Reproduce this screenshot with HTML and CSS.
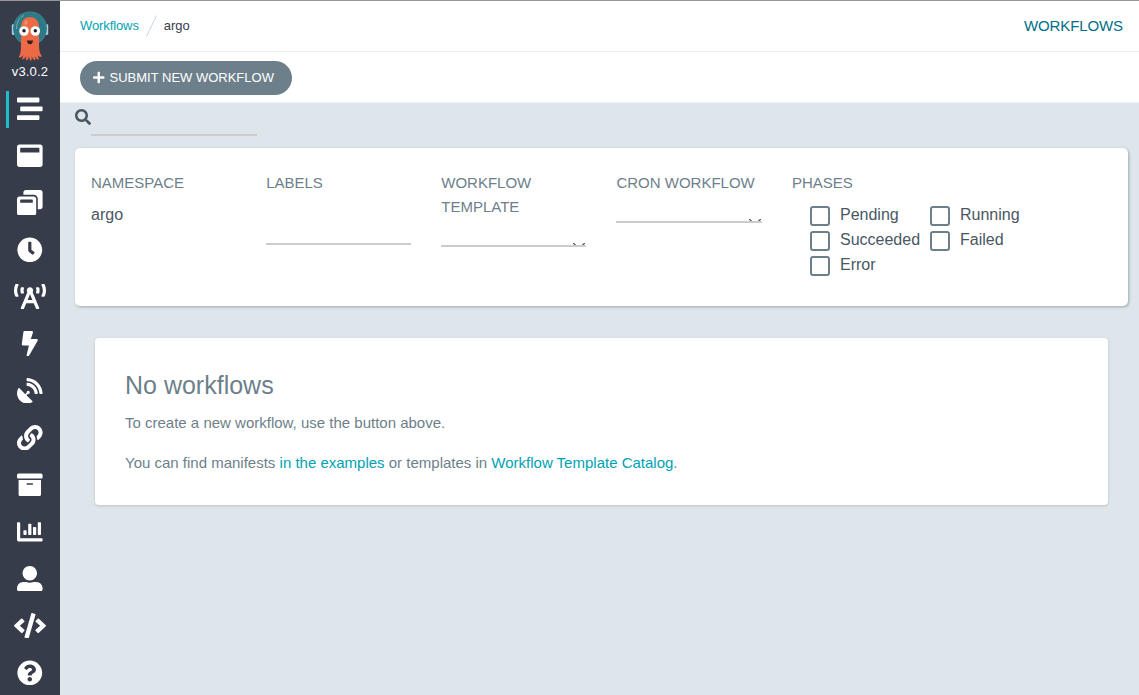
FILE: index.html
```html
<!DOCTYPE html>
<html lang="en">
<head>
<meta charset="utf-8">
<title>Workflows</title>
<link rel="stylesheet" href="styles.css">
</head>
<body>
<div class="app">
  <nav class="sidebar">
    <div class="logo">
      <svg width="38" height="52" viewBox="0 0 38 52">
        <rect x="0.800" y="14" width="3" height="11" rx="1.500" fill="#a9cfe5"/>
        <rect x="34.200" y="14" width="3" height="11" rx="1.500" fill="#a9cfe5"/>
        <circle cx="19" cy="18.500" r="17" fill="#3a858f"/>
        <circle cx="19" cy="18.500" r="16" fill="#2b7a86"/>
        <path d="M5.500 19C5.500 12 8.500 7.500 13 5.500" fill="none" stroke="#78aeb4" stroke-width="1"/>
        <path d="M19 7c-6 0-9 4.500-9 10.500v17c0 6-.5 10-2.500 13 3 .3 4-1 4.700-2.500-.2 2-.7 3-1.200 4.500 2.500-.3 3.500-1.500 4-4 .2 2 .2 4-.2 5 2-.5 3-1.800 3.200-4.500.3 2.500.7 4 2 5 .8-1.700.8-3 .8-5 .7 2.500 1.700 4 3.600 4.500-.3-1.700-.5-2.500-.5-4.500.8 2.500 2 3.700 4.300 3.500-1-1.700-1.300-3-1.500-4.500.8 1.500 2 2.200 4.300 1.500-2.500-3-3-7-3-12V17.500C28 11.500 25 7 19 7z" fill="#ec6a45"/>
        <ellipse cx="15" cy="12.500" rx="1.700" ry="2.200" fill="#f2906c"/>
        <circle cx="13" cy="21" r="4.800" fill="#fff"/>
        <circle cx="24.300" cy="21" r="4.800" fill="#fff"/>
        <circle cx="13" cy="20.800" r="1.700" fill="#1c1c24"/>
        <circle cx="24.300" cy="20.800" r="1.700" fill="#1c1c24"/>
        <path d="M16 30.500h6c0 2.300-1.300 3.800-3 3.800s-3-1.500-3-3.800z" fill="#3b1c20"/>
      </svg>
      <div class="version">v3.0.2</div>
    </div>
    <a class="item active"><svg class="icon" viewBox="0 0 512 512"><path d="M16 128h416c8.840 0 16-7.160 16-16V48c0-8.840-7.160-16-16-16H16C7.160 32 0 39.160 0 48v64c0 8.840 7.160 16 16 16zm480 80H80c-8.840 0-16 7.160-16 16v64c0 8.840 7.160 16 16 16h416c8.840 0 16-7.160 16-16v-64c0-8.840-7.160-16-16-16zm-64 176H16c-8.840 0-16 7.160-16 16v64c0 8.840 7.160 16 16 16h416c8.840 0 16-7.160 16-16v-64c0-8.840-7.160-16-16-16z"/></svg></a>
    <a class="item"><svg class="icon" viewBox="0 0 512 512"><path d="M464 32H48C21.500 32 0 53.500 0 80v352c0 26.500 21.500 48 48 48h416c26.500 0 48-21.500 48-48V80c0-26.500-21.500-48-48-48zm-16 160H64v-84c0-6.600 5.400-12 12-12h360c6.600 0 12 5.400 12 12v84z"/></svg></a>
    <a class="item"><svg class="icon" viewBox="0 0 512 512"><path d="M512 48v288c0 26.500-21.500 48-48 48h-48V176c0-44.100-35.900-80-80-80H128V48c0-26.500 21.500-48 48-48h288c26.500 0 48 21.500 48 48zM384 176v288c0 26.500-21.500 48-48 48H48c-26.500 0-48-21.500-48-48V176c0-26.500 21.500-48 48-48h288c26.500 0 48 21.500 48 48zm-68 28c0-6.600-5.400-12-12-12H76c-6.600 0-12 5.400-12 12v52h252v-52z"/></svg></a>
    <a class="item"><svg class="icon" viewBox="0 0 512 512"><path d="M256,8C119,8,8,119,8,256S119,504,256,504,504,393,504,256,393,8,256,8Zm92.490,313h0l-20,25a16,16,0,0,1-22.490,2.500h0l-67-49.720a40,40,0,0,1-15-31.230V112a16,16,0,0,1,16-16h32a16,16,0,0,1,16,16V256l58,42.500A16,16,0,0,1,348.490,321Z"/></svg></a>
    <a class="item"><svg class="icon wide" viewBox="0 0 640 512"><path d="M150.940 192h33.730c11.010 0 18.610-10.830 14.860-21.180-4.930-13.580-7.550-27.980-7.550-42.820s2.620-29.240 7.550-42.820C203.290 74.830 195.680 64 184.670 64h-33.730c-7.010 0-13.460 4.490-15.410 11.230C130.640 92.210 128 109.880 128 128c0 18.120 2.640 35.790 7.540 52.760 1.940 6.740 8.390 11.240 15.400 11.240zM89.920 23.340C95.560 12.720 87.970 0 75.960 0H40.630c-6.270 0-12.140 3.590-14.740 9.310C9.400 45.540 0 85.650 0 128c0 24.750 3.120 68.330 26.690 118.860 2.620 5.630 8.420 9.140 14.610 9.140h34.840c12.020 0 19.610-12.740 13.950-23.370-49.780-93.320-16.710-178.150-.17-209.290zM614.060 9.290C611.460 3.580 605.600 0 599.330 0h-35.420c-11.980 0-19.660 12.660-14.020 23.250 18.270 34.290 48.420 119.420.28 209.230-5.720 10.680 1.800 23.520 13.910 23.520h35.230c6.270 0 12.130-3.580 14.730-9.290C630.570 210.480 640 170.360 640 128s-9.420-82.480-25.940-118.710zM489.060 64h-33.730c-11.010 0-18.610 10.830-14.860 21.180 4.930 13.580 7.550 27.980 7.550 42.820s-2.620 29.240-7.550 42.820c-3.760 10.350 3.850 21.180 14.860 21.180h33.730c7.020 0 13.460-4.490 15.410-11.240 4.900-16.970 7.530-34.640 7.530-52.760 0-18.120-2.640-35.790-7.540-52.760-1.940-6.750-8.390-11.240-15.400-11.240zm-116.300 100.120c7.050-10.290 11.200-22.710 11.200-36.120 0-35.350-28.630-64-63.960-64-35.320 0-63.960 28.650-63.960 64 0 13.410 4.150 25.830 11.200 36.120l-130.500 313.410c-3.400 8.150.46 17.520 8.610 20.920l29.510 12.310c8.150 3.400 17.520-.46 20.910-8.610L244.960 384h150.070l49.200 118.150c3.400 8.160 12.760 12.010 20.910 8.610l29.510-12.310c8.150-3.400 12-12.770 8.610-20.920l-130.500-313.410zM271.620 320L320 203.810 368.380 320h-96.760z"/></svg></a>
    <a class="item"><svg class="icon" viewBox="-96 0 512 512"><path d="M296 160H180.600l42.600-129.800C227.200 15 215.700 0 200 0H56C44 0 33.800 8.900 32.200 20.800l-32 240C-1.700 275.200 9.500 288 24 288h118.700L96.600 482.500c-3.600 15.200 8 29.500 23.300 29.500 8.400 0 16.400-4.400 20.800-12l176-304c9.300-15.900-2.200-36-20.700-36z"/></svg></a>
    <a class="item"><svg class="icon" viewBox="0 0 512 512"><path d="M305.450,462.590c7.390,7.298,6.188,20.097-3,25.004-77.713,41.803-176.726,29.910-242.343-35.708C-5.496,386.282-17.404,287.362,24.414,209.554c4.891-9.095,17.690-10.298,25.003-3L166.229,323.367l27.394-27.395c-.688-2.610-1.594-5-1.594-7.813a32.004,32.004,0,1,1,32.004,32.004c-2.797,0-5.204-.891-7.798-1.594l-27.410,27.410ZM511.976,303.067a16.103,16.103,0,0,1-16.002,17.002H463.860a15.970,15.970,0,0,1-15.893-15.002C440.467,175.549,336.453,70.534,207.031,63.533a15.845,15.845,0,0,1-15.002-15.908V16.027A16.094,16.094,0,0,1,209.031.024C372.255,8.619,503.475,139.841,511.976,303.067Zm-96.012-.297a16.211,16.211,0,0,1-16.111,17.299H367.645a16.069,16.069,0,0,1-15.893-14.705c-6.907-77.011-68.118-138.910-144.925-145.224a15.940,15.940,0,0,1-14.799-15.893V112.134a16.134,16.134,0,0,1,17.299-16.096C319.451,104.539,407.556,192.645,415.964,302.770Z"/></svg></a>
    <a class="item"><svg class="icon" viewBox="0 0 512 512"><path d="M326.612 185.391c59.747 59.809 58.927 155.698.36 214.590-.11.12-.24.25-.36.37l-67.200 67.200c-59.270 59.270-155.699 59.262-214.960 0-59.270-59.260-59.270-155.700 0-214.960l37.106-37.106c9.840-9.840 26.786-3.300 27.294 10.606.648 17.722 3.826 35.527 9.690 52.721 1.986 5.822.567 12.262-3.783 16.612l-13.087 13.087c-28.026 28.026-28.905 73.660-1.155 101.960 28.024 28.579 74.086 28.749 102.325.51l67.200-67.190c28.191-28.191 28.073-73.757 0-101.830-3.701-3.694-7.429-6.564-10.341-8.569a16.037 16.037 0 0 1-6.947-12.606c-.396-10.567 3.348-21.456 11.698-29.806l21.054-21.055c5.521-5.521 14.182-6.199 20.584-1.731a152.482 152.482 0 0 1 20.522 17.197zM467.547 44.449c-59.261-59.262-155.690-59.270-214.960 0l-67.200 67.200c-.12.12-.25.25-.36.37-58.566 58.892-59.387 154.781.36 214.590a152.454 152.454 0 0 0 20.521 17.196c6.402 4.468 15.064 3.789 20.584-1.731l21.054-21.055c8.350-8.350 12.094-19.239 11.698-29.806a16.037 16.037 0 0 0-6.947-12.606c-2.912-2.005-6.640-4.875-10.341-8.569-28.073-28.073-28.191-73.639 0-101.830l67.200-67.190c28.239-28.239 74.300-28.069 102.325.51 27.750 28.300 26.872 73.934-1.155 101.960l-13.087 13.087c-4.350 4.350-5.769 10.790-3.783 16.612 5.864 17.194 9.042 34.999 9.690 52.721.509 13.906 17.454 20.446 27.294 10.606l37.106-37.106c59.271-59.259 59.271-155.699.001-214.959z"/></svg></a>
    <a class="item"><svg class="icon" viewBox="0 0 512 512"><path d="M32 448c0 17.700 14.300 32 32 32h384c17.700 0 32-14.300 32-32V160H32v288zm160-212c0-6.600 5.400-12 12-12h104c6.600 0 12 5.400 12 12v8c0 6.600-5.400 12-12 12H204c-6.600 0-12-5.400-12-12v-8zM480 32H32C14.300 32 0 46.300 0 64v48c0 8.800 7.200 16 16 16h480c8.800 0 16-7.200 16-16V64c0-17.700-14.300-32-32-32z"/></svg></a>
    <a class="item"><svg class="icon" viewBox="0 0 512 512"><path d="M332.800 320h38.400c6.400 0 12.800-6.400 12.800-12.800V172.800c0-6.400-6.400-12.800-12.800-12.800h-38.400c-6.400 0-12.800 6.400-12.800 12.800v134.400c0 6.400 6.400 12.800 12.800 12.800zm96 0h38.400c6.400 0 12.800-6.400 12.800-12.800V76.800c0-6.400-6.400-12.800-12.800-12.800h-38.400c-6.400 0-12.800 6.400-12.800 12.800v230.400c0 6.400 6.400 12.800 12.800 12.800zm-288 0h38.400c6.400 0 12.800-6.400 12.800-12.800v-70.400c0-6.400-6.400-12.800-12.800-12.800h-38.400c-6.400 0-12.800 6.400-12.800 12.800v70.400c0 6.400 6.400 12.800 12.800 12.800zm96 0h38.400c6.400 0 12.800-6.400 12.800-12.800V108.800c0-6.400-6.400-12.800-12.800-12.800h-38.400c-6.400 0-12.800 6.400-12.800 12.800v198.400c0 6.400 6.400 12.800 12.800 12.800zM496 384H64V80c0-8.840-7.160-16-16-16H16C7.160 64 0 71.160 0 80v336c0 17.670 14.330 32 32 32h464c8.840 0 16-7.160 16-16v-32c0-8.840-7.160-16-16-16z"/></svg></a>
    <a class="item"><svg class="icon" viewBox="0 0 512 512"><path d="M256 288c79.500 0 144-64.500 144-144S335.500 0 256 0 112 64.500 112 144s64.500 144 144 144zm128 32h-55.100c-22.200 10.200-46.900 16-72.900 16s-50.600-5.800-72.900-16H128C57.300 320 0 377.300 0 448v16c0 26.500 21.500 48 48 48h416c26.500 0 48-21.500 48-48v-16c0-70.700-57.300-128-128-128z"/></svg></a>
    <a class="item"><svg class="icon wide" viewBox="0 0 640 512"><path d="M278.900 511.500l-61-17.700c-6.400-1.800-10-8.500-8.200-14.900L346.200 8.700c1.800-6.400 8.500-10 14.900-8.200l61 17.700c6.400 1.800 10 8.500 8.200 14.900L293.800 503.300c-1.900 6.400-8.500 10.100-14.900 8.200zm-114-112.200l43.500-46.400c4.600-4.900 4.300-12.700-.8-17.200L117 256l90.600-79.700c5.100-4.500 5.500-12.300.8-17.200l-43.500-46.400c-4.500-4.800-12.100-5.100-17-.5L3.800 247.200c-5.100 4.700-5.100 12.800 0 17.500l144.100 135.100c4.900 4.600 12.500 4.400 17-.5zm327.200.6l144.100-135.100c5.100-4.700 5.100-12.800 0-17.500L492.100 112.100c-4.800-4.500-12.400-4.300-17 .5L431.600 159c-4.600 4.900-4.300 12.700.8 17.200L523 256l-90.600 79.700c-5.100 4.500-5.500 12.300-.8 17.200l43.500 46.400c4.500 4.900 12.100 5.100 17 .6z"/></svg></a>
    <a class="item"><svg class="icon" viewBox="0 0 512 512"><path d="M504 256c0 136.997-111.043 248-248 248S8 392.997 8 256C8 119.083 119.043 8 256 8s248 111.083 248 248zM262.655 90c-54.497 0-89.255 22.957-116.549 63.758-3.536 5.286-2.353 12.415 2.715 16.258l34.699 26.310c5.205 3.947 12.621 3.008 16.665-2.122 17.864-22.658 30.113-35.797 57.303-35.797 20.429 0 45.698 13.148 45.698 32.958 0 14.976-12.363 22.667-32.534 33.976C247.128 238.528 216 254.941 216 296v4c0 6.627 5.373 12 12 12h56c6.627 0 12-5.373 12-12v-1.333c0-28.462 83.186-29.647 83.186-106.667 0-58.002-60.165-102-116.531-102zM256 338c-25.365 0-46 20.635-46 46 0 25.364 20.635 46 46 46s46-20.636 46-46c0-25.364-20.635-46-46-46z"/></svg></a>
  </nav>
  <main class="main">
    <header class="topbar">
      <div class="crumbs">
        <a class="link">Workflows</a>
        <svg class="slash" width="11" height="22" viewBox="0 0 11 22"><path d="M.5 21.500L10.500.5" stroke="#ccd6dd" fill="none"/></svg>
        <span>argo</span>
      </div>
      <div class="page-title">WORKFLOWS</div>
    </header>
    <div class="toolbar">
      <button class="submit"><svg class="plus" viewBox="0 0 448 512"><path d="M416 208H272V64c0-17.670-14.330-32-32-32h-32c-17.670 0-32 14.330-32 32v144H32c-17.670 0-32 14.330-32 32v32c0 17.670 14.330 32 32 32h144v144c0 17.670 14.330 32 32 32h32c17.670 0 32-14.330 32-32V304h144c17.670 0 32-14.330 32-32v-32c0-17.670-14.330-32-32-32z"/></svg><span>SUBMIT NEW WORKFLOW</span></button>
    </div>
    <section class="content">
      <div class="search">
        <svg class="search-icon" viewBox="0 0 512 512"><path d="M505 442.700L405.300 343c-4.500-4.500-10.600-7-17-7H372c27.600-35.300 44-79.700 44-128C416 93.100 322.900 0 208 0S0 93.100 0 208s93.100 208 208 208c48.300 0 92.700-16.400 128-44v16.300c0 6.400 2.500 12.500 7 17l99.700 99.700c9.400 9.400 24.600 9.400 33.900 0l28.300-28.300c9.400-9.400 9.400-24.600.1-34zM208 336c-70.700 0-128-57.200-128-128 0-70.700 57.200-128 128-128 70.700 0 128 57.200 128 128 0 70.700-57.200 128-128 128z"/></svg>
        <div class="search-field"></div>
      </div>
      <div class="filters">
        <div class="filter"><p class="label">NAMESPACE</p><div class="value">argo</div></div>
        <div class="filter"><p class="label">LABELS</p><div class="field tags"></div></div>
        <div class="filter"><p class="label">WORKFLOW TEMPLATE</p><div class="field select"><svg class="caret" width="12" height="2" viewBox="0 0 12 2"><path d="M0 0l2.500 2M12 0L9.500 2" stroke="#495763" stroke-width="1.300"/></svg></div></div>
        <div class="filter"><p class="label">CRON WORKFLOW</p><div class="field select"><svg class="caret" width="12" height="2" viewBox="0 0 12 2"><path d="M0 0l2.500 2M12 0L9.500 2" stroke="#495763" stroke-width="1.300"/></svg></div></div>
        <div class="filter phases"><p class="label">PHASES</p>
          <div class="checks">
            <label class="check"><span class="box"></span>Pending</label>
            <label class="check"><span class="box"></span>Running</label>
            <label class="check"><span class="box"></span>Succeeded</label>
            <label class="check"><span class="box"></span>Failed</label>
            <label class="check"><span class="box"></span>Error</label>
          </div>
        </div>
      </div>
      <div class="empty">
        <h4>No workflows</h4>
        <p>To create a new workflow, use the button above.</p>
        <p>You can find manifests <a class="link">in the examples</a> or templates in <a class="link">Workflow Template Catalog</a>.</p>
      </div>
    </section>
  </main>
</div>
</body>
</html>
```

FILE: styles.css
```css
* { box-sizing: border-box; }
body {
  margin: 0;
  font-family: "Liberation Sans", Arial, sans-serif;
  font-size: 15px;
  color: #495763;
  background: #dee6eb;
}
.app {
  display: flex;
  height: 695px;
  overflow: hidden;
  border-top: 1px solid #979797;
}
.sidebar {
  flex: 0 0 60px;
  background: #373c4b;
  display: flex;
  flex-direction: column;
}
.logo {
  height: 84px;
  flex: none;
  padding-top: 9px;
  display: flex;
  flex-direction: column;
  align-items: center;
}
.version {
  color: #fff;
  font-size: 13px;
  letter-spacing: 0.15px;
  line-height: 18px;
  padding-top: 1px;
}
.item {
  flex: none;
  height: 47px;
  display: flex;
  align-items: center;
  justify-content: center;
  background-repeat: no-repeat;
}
.item.active {
  background-image: linear-gradient(#1fbccd, #1fbccd);
  background-size: 3px 37px;
  background-position: 6px 6px;
}
.icon { width: 25.600px; height: 25.600px; fill: #fff; }
.icon.wide { width: 32px; }
.main {
  flex: 1;
  display: flex;
  flex-direction: column;
}
.topbar {
  height: 51px;
  flex: none;
  padding: 0 16px 2px 20px;
  display: flex;
  justify-content: space-between;
  align-items: center;
  background: #fff;
  border-bottom: 1px solid #eee;
}
.crumbs {
  display: flex;
  align-items: center;
  font-size: 13px;
  color: #363c4a;
}
.crumbs .link { letter-spacing: -0.1px; }
.slash { margin: 2px 7px 0 7px; }
.link { color: #00a2b3; }
.page-title { color: #006f8a; letter-spacing: -0.1px; }
.toolbar {
  height: 51px;
  flex: none;
  padding: 9px 20px;
  background: #fff;
  border-bottom: 1px solid #eef1f3;
}
.submit {
  display: flex;
  align-items: center;
  gap: 5px;
  height: 34px;
  width: 212px;
  padding: 0 0 1px 13px;
  border: 0;
  border-radius: 17px;
  background: #6d7f8b;
  color: #fff;
  font: 13px "Liberation Sans", Arial, sans-serif;
  white-space: nowrap;
}
.plus { width: 11.500px; height: 13px; fill: #fff; flex: none; }
.content { padding: 0 11px 0 15px; }
.search { display: flex; height: 45px; }
.search-icon { width: 16px; height: 16px; margin-top: 6px; fill: #495763; }
.search-field { width: 166px; height: 33px; border-bottom: 2px solid #ccc; }
.filters {
  height: 158px;
  padding: 23px 16px 0;
  display: grid;
  grid-template-columns: repeat(3, 145.150px) 145.550px 1fr;
  column-gap: 30px;
  align-items: start;
  background: #fff;
  border-radius: 5px;
  box-shadow: 1px 1px 3px rgba(109, 127, 139, 0.6);
}
.label { margin: 0; line-height: 24px; color: #6d7f8b; }
.value { margin-top: 8px; font-size: 16px; line-height: 24px; }
.field { border-bottom: 2px solid #ccc; }
.field.tags { height: 50px; }
.field.select {
  height: 28px;
  display: flex;
  justify-content: flex-end;
  align-items: flex-end;
  padding-right: 1px;
}
.checks {
  display: grid;
  grid-template-columns: 120px 120px;
  grid-auto-rows: 25px;
  padding: 8px 0 0 18px;
}
.check {
  display: flex;
  gap: 10px;
  font-size: 16px;
  line-height: 24px;
}
.box {
  width: 20px;
  height: 20px;
  margin-top: 3px;
  border: 2px solid #6d7f8b;
  border-radius: 3px;
}
.empty {
  margin: 32px 20px 0;
  height: 167px;
  padding: 30px;
  background: #fff;
  border-radius: 4px;
  box-shadow: 0 1px 3px rgba(0, 0, 0, 0.15);
  color: #6d7f8b;
}
.empty h4 {
  margin: 0;
  font-size: 25px;
  font-weight: normal;
  line-height: 35px;
}
.empty p {
  margin: 8px 0 16px;
  line-height: 24px;
}
.empty p + p { margin: 0; }
```
